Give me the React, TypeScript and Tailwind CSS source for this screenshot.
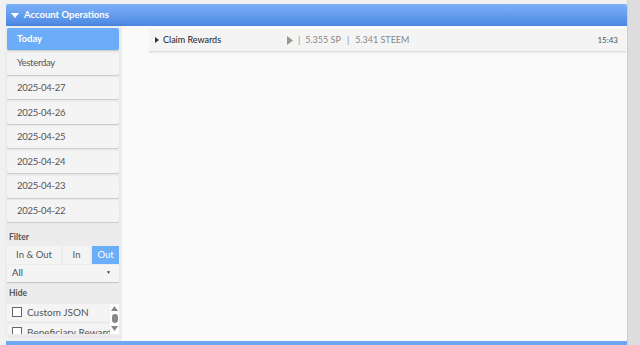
import React from 'react';

const dates = ['Yesterday', '2025-04-27', '2025-04-26', '2025-04-25', '2025-04-24', '2025-04-23', '2025-04-22'];

export default function App() {
  return (
    <div className="flex h-[345px] w-full overflow-hidden bg-[#f1f1f1] font-['Lato',sans-serif]">
      <div className="flex flex-1 flex-col pl-[6px] pt-[4px]">
        {/* Header */}
        <div className="flex h-[22px] shrink-0 items-center gap-[5px] rounded-t-[2px] bg-gradient-to-b from-[#7db1f8] to-[#4b87e2] pl-[5px] text-[9.5px] font-bold text-white">
          <svg width="8" height="5" viewBox="0 0 8 5">
            <path d="M0 0h8L4 5z" fill="#fff" />
          </svg>
          Account Operations
        </div>

        <div className="flex min-h-0 flex-1">
          {/* Sidebar */}
          <div className="flex h-[310px] w-[116px] shrink-0 flex-col overflow-hidden bg-[#ececec] pl-[1px] pr-[3px] pt-[2px] shadow-[2px_0_4px_rgba(0,0,0,0.12)]">
            <div className="flex flex-col gap-[2.6px]">
              <div className="flex h-[22px] items-center rounded-[2px] bg-[#6badf8] pl-[10px] text-[9.5px] font-bold text-white shadow-[0_1px_1px_rgba(0,0,0,0.15)]">
                Today
              </div>
              {dates.map((d) => (
                <div
                  key={d}
                  className="flex h-[22px] items-center rounded-[2px] bg-[#f4f4f4] pl-[10px] text-[9.5px] tracking-[-0.3px] text-[#555] shadow-[0_1px_1px_rgba(0,0,0,0.15)]"
                >
                  {d}
                </div>
              ))}
            </div>

            <div className="mt-[9px] flex h-[12px] items-center pl-[2px] text-[8.5px] font-bold text-[#555]">Filter</div>
            <div className="mt-[3px] flex h-[17.5px] shrink-0 gap-[2px] text-[9.5px] text-[#555]">
              <div className="flex w-[54px] items-center justify-center bg-[#f4f4f4]">In &amp; Out</div>
              <div className="flex w-[27px] items-center justify-center bg-[#f4f4f4]">In</div>
              <div className="flex flex-1 items-center justify-center bg-[#6badf8] text-white">Out</div>
            </div>
            <div className="mt-[1px] flex h-[17px] shrink-0 items-center justify-between bg-[#f4f4f4] pl-[5px] pr-[8px] text-[9.5px] text-[#444] shadow-[0_1px_1px_rgba(0,0,0,0.15)]">
              All
              <span className="text-[5px]">▼</span>
            </div>

            <div className="mt-[6px] flex h-[12px] items-center pl-[2px] text-[8.5px] font-bold text-[#555]">Hide</div>
            <div className="mt-[4px] flex h-[30px] shrink-0">
              <div className="flex flex-1 flex-col gap-[3px] overflow-hidden">
                <div className="flex h-[17px] shrink-0 items-center gap-[5px] whitespace-nowrap bg-[#f4f4f4] pl-[5px] text-[10px] text-[#555]">
                  <span className="h-[10px] w-[10px] shrink-0 border border-[#666] bg-white" />
                  Custom JSON
                </div>
                <div className="flex h-[17px] shrink-0 items-center gap-[5px] whitespace-nowrap bg-[#f4f4f4] pl-[5px] text-[10px] text-[#555]">
                  <span className="h-[10px] w-[10px] shrink-0 border border-[#666] bg-white" />
                  Beneficiary Reward
                </div>
              </div>
              <div className="flex w-[9px] shrink-0 flex-col items-center bg-white pt-[2px]">
                <svg width="7" height="5" viewBox="0 0 7 5">
                  <path d="M3.5 0L7 5H0z" fill="#888" />
                </svg>
                <span className="mt-[3px] h-[9px] w-[6px] rounded-full bg-[#888]" />
                <svg className="mt-[3px]" width="7" height="5" viewBox="0 0 7 5">
                  <path d="M0 0h7L3.5 5z" fill="#888" />
                </svg>
              </div>
            </div>
          </div>

          {/* Main */}
          <div className="flex-1 bg-[#fafafa] pl-[27px] pr-[1px] pt-[3px]">
            <div className="flex h-[23px] items-center border-b border-[#dcdcdc] bg-[#f4f4f4] pl-[6px] pr-[8px] text-[#333] shadow-[0_1px_1px_rgba(0,0,0,0.05)]">
              <svg width="4" height="6" viewBox="0 0 4 6">
                <path d="M0 0L4 3L0 6z" fill="#333" />
              </svg>
              <span className="ml-[4px] w-[124px] text-[9px] text-[#222]">Claim Rewards</span>
              <svg width="6" height="9" viewBox="0 0 6 9">
                <path d="M0 0L6 4.5L0 9z" fill="#999" />
              </svg>
              <span className="ml-[5px] flex items-center text-[9px] text-[#888]">
                <span>|</span>
                <span className="ml-[5px]">5.355 SP</span>
                <span className="ml-[6px]">|</span>
                <span className="ml-[6px]">5.341 STEEM</span>
              </span>
              <span className="ml-auto text-[8px] text-[#555]">15:43</span>
            </div>
          </div>
        </div>

        <div className="h-[4px] shrink-0 bg-[#6fa6f2]" />
      </div>
      <div className="w-[13px] shrink-0 border-l border-[#cdcdcd] bg-[#dddddd]" />
    </div>
  );
}
